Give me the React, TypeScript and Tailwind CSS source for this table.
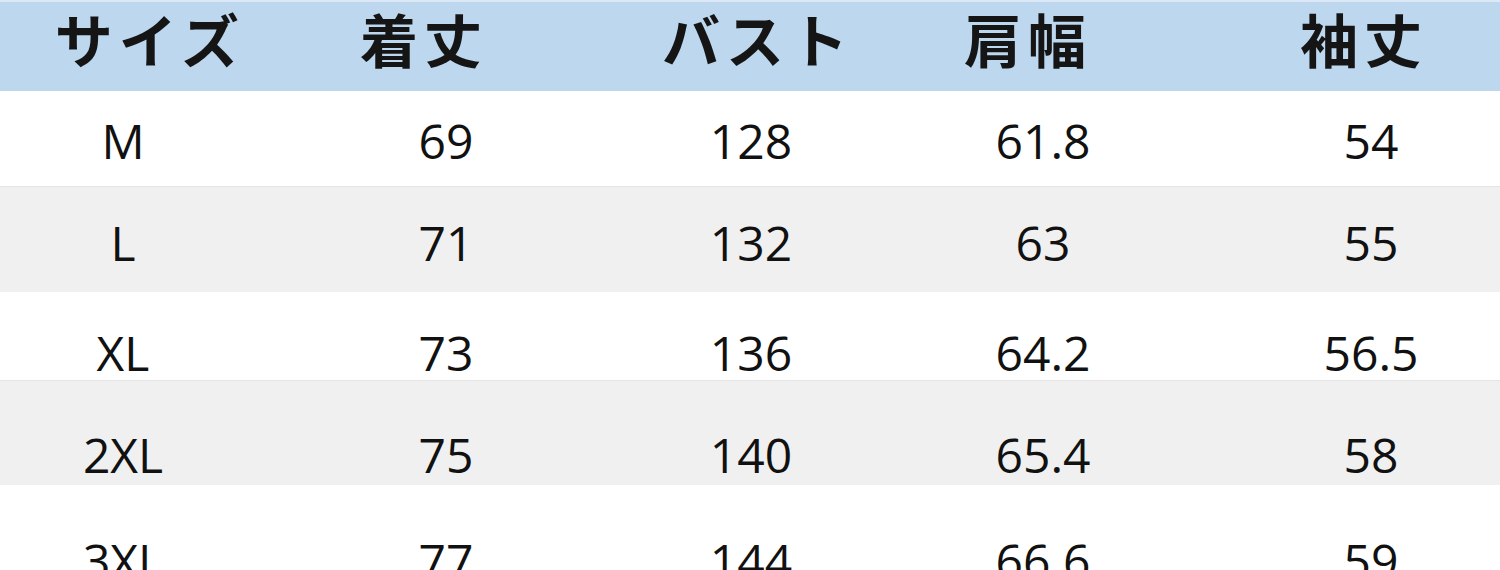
import React from "react";

const rows = [
  { cells: ["M", "69", "128", "61.8", "54"], bg: "bg-white", h: "h-[95px]", pt: "pt-[26px]" },
  { cells: ["L", "71", "132", "63", "55"], bg: "bg-[#f0f0f0] border-t border-[#e4e4e4]", h: "h-[106px]", pt: "pt-[32px]" },
  { cells: ["XL", "73", "136", "64.2", "56.5"], bg: "bg-white", h: "h-[88px]", pt: "pt-[37px]" },
  { cells: ["2XL", "75", "140", "65.4", "58"], bg: "bg-[#f0f0f0] border-t border-[#e4e4e4]", h: "h-[105px]", pt: "pt-[50px]" },
  { cells: ["3XL", "77", "144", "66.6", "59"], bg: "bg-white", h: "h-[85px]", pt: "pt-[52px]" },
];

export default function App() {
  return (
    <div className="w-[1500px] h-[570px] overflow-hidden bg-white">
      <div className="h-[2px] bg-[#dce8f5]" />
      <div
        className="grid grid-cols-[300px_248px_400px_160px_1fr] h-[89px] items-start pt-[7px] bg-[#bdd7ee] text-[58px] font-bold leading-[64px] text-[#151515] tracking-[6px] whitespace-nowrap"
        style={{ fontFamily: '"Noto Sans CJK JP", "Noto Sans", sans-serif' }}
      >
        <div className="text-center -mt-[3px]">サイズ</div>
        <div className="text-center -mt-[3px]">着丈</div>
        <div className="text-center pl-[20px] -mt-[3px]">バスト</div>
        <div className="text-center -mt-[3px]">肩幅</div>
        <div className="text-center pl-[120px] -mt-[3px]">袖丈</div>
      </div>
      {rows.map((r, i) => (
        <div
          key={i}
          className={`grid grid-cols-[246px_400px_210px_386px_258px] ${r.bg} ${r.h} ${r.pt} text-[48px] leading-none text-[#111]`}
          style={{ fontFamily: '"Open Sans", "Noto Sans", sans-serif' }}
        >
          <div className="text-center">{r.cells[0]}</div>
          <div className="text-center">{r.cells[1]}</div>
          <div className="text-center">{r.cells[2]}</div>
          <div className="text-center pr-[12px]">{r.cells[3]}</div>
          <div className="text-center">{r.cells[4]}</div>
        </div>
      ))}
    </div>
  );
}
